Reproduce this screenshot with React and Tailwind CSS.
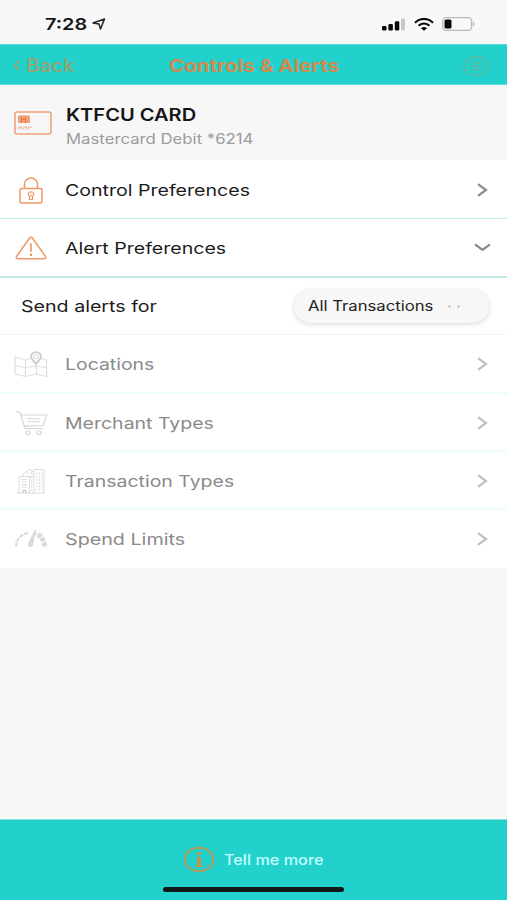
import React from 'react';

function Chevron({ className, down }) {
  return down ? (
    <svg className={className} width="17" height="9" viewBox="0 0 17 9" fill="none" stroke="currentColor" strokeWidth="2.200">
      <path d="M1 1.300 8.500 6.900 16 1.300" />
    </svg>
  ) : (
    <svg className={className} width="11" height="14" viewBox="0 0 11 14" fill="none" stroke="currentColor" strokeWidth="2.200">
      <path d="M1 1.200 9 7 1 12.800" />
    </svg>
  );
}

function CardIcon() {
  return (
    <svg width="38" height="24" viewBox="0 0 38 24" fill="none" stroke="#f0a27a" strokeWidth="1.600">
      <rect x="1" y="1" width="36" height="22" rx="2" />
      <rect x="4" y="4.500" width="12" height="7.500" rx="1" fill="#f1a078" stroke="none" />
      <path d="M7.500 5v7M11.500 5v7M7.500 8.500h4" stroke="#d8793f" strokeWidth=".9" />
      <path d="M4 18.500l1-2.500h3l-1 2.500M9 18.500l1-2.500h3l-1 2.500M14 18.500l1-2.500h3.500" strokeWidth="1" opacity=".85" />
    </svg>
  );
}

function LockIcon() {
  return (
    <svg width="24" height="27" viewBox="0 0 24 27" fill="none" stroke="#ef9765" strokeWidth="1.500">
      <rect x="1" y="11.500" width="22" height="14.500" rx="1.500" />
      <path d="M5.500 11.500V7a6.500 6 0 0 1 13 0v4.500" />
      <path d="M12 14.800c-3.200 0-3.200 3.200-1.600 4.400V22.500h3.200v-3.300c1.600-1.200 1.600-4.400-1.600-4.400z" strokeWidth="1.200" />
      <path d="M12 17v3" strokeWidth="1" />
    </svg>
  );
}

function AlertIcon() {
  return (
    <svg width="32" height="24" viewBox="0 0 32 24" fill="none" stroke="#ef9765" strokeWidth="1.500" strokeLinejoin="round">
      <path d="M14.600 2 1.500 20.500Q.7 22.700 3 22.700H29Q31.300 22.700 30.500 20.500L17.400 2Q16 .3 14.600 2Z" />
      <path d="M16 7.500v8.200" strokeWidth="1.700" />
      <circle cx="16" cy="18.800" r="1.200" fill="#ee8b55" stroke="none" />
    </svg>
  );
}

function MapIcon() {
  return (
    <svg width="34" height="27" viewBox="0 0 34 27" fill="none" stroke="#dedede" strokeWidth="1.200">
      <path d="M17 7.500 11.500 9 1 6V23l10.500 2.500L22.500 23 32.500 25.500V9L27 7.500M11.500 9v16.500M22.500 13.500V23M1 15l10.500 1.500L22.500 15l10 1.500" />
      <path d="M22 13C19.500 9.500 17 8 17 5.700a5 4.700 0 0 1 10 0C27 8 24.500 9.500 22 13Z" stroke="#cbcbcb" strokeWidth="1.700" />
      <ellipse cx="22" cy="5.500" rx="2.600" ry="2.300" stroke="#e3e3e3" />
    </svg>
  );
}

function CartIcon() {
  return (
    <svg width="33" height="26" viewBox="0 0 33 26" fill="none" stroke="#d5d5d5" strokeWidth="1.200">
      <path d="M1 1.500 5 2.500 10 18.500H28M6 5H31.500L28.500 15.500 9 16.200" />
      <path d="M12 8.700h13M13 11.700h12" strokeWidth="1" />
      <ellipse cx="13" cy="22.800" rx="2.200" ry="1.800" />
      <ellipse cx="24" cy="22.800" rx="2.200" ry="1.800" />
    </svg>
  );
}

function BuildingsIcon() {
  return (
    <svg width="28" height="26" viewBox="0 0 28 26" fill="none" stroke="#dcdcdc" strokeWidth="1">
      <path d="M0 25H28M2 25V8.500H12.500V25M17 25V1.500H27V25M6 8.500V6L12 1.500 17 4M12.500 9H17M5 8.500V7" />
      <path d="M4.500 11.500h5.500M4.500 14h5.500M4.500 16.500h5.500M4.500 19h5.500" />
      <path d="M20 4.500v18M22.500 4.500v18M25 4.500v18M14.800 5v18M10 5.500l4.500-1.500" strokeDasharray="2 1.200" />
      <path d="M6 25v-2.500h3V25" stroke="#bbb" />
    </svg>
  );
}

function GaugeIcon() {
  return (
    <svg width="34" height="18" viewBox="0 0 34 18" fill="none" stroke="#d9d9d9">
      <path d="M2 16.500C2.500 9 7 4 14.500 3" strokeWidth="2.200" strokeDasharray="4 1.200" />
      <path d="M24 4.500C27.500 7 30 10 31 17.500" strokeWidth="5" strokeDasharray="4 1" />
      <path d="M21.500 0 14.500 14a2 2 0 0 0 3.500 1.800L21.500 0Z" fill="#ddd" stroke="#cfcfcf" strokeWidth="1" />
      <path d="M19.500 2.500l4 2" strokeWidth="1.500" />
    </svg>
  );
}

function StatusBar() {
  return (
    <div className="flex h-11 shrink-0 items-center pt-[4px] pl-[45px] pr-[32px]">
      <span className="w-[47px] whitespace-nowrap text-[16px] leading-5 font-semibold text-[#171717]">
        <span className="inline-block origin-left scale-x-[1.240]">7:28</span>
      </span>
      <svg width="14" height="12" viewBox="0 0 14 12" fill="none" stroke="#222" strokeWidth="1.500" strokeLinejoin="round">
        <path d="M12.500 1 1 5l6 1L8.500 11z" />
      </svg>
      <div className="ml-auto flex items-center gap-[8px]">
        <svg width="24" height="13" viewBox="0 0 24 13" fill="#080808">
          <rect x="0" y="8" width="4.500" height="4.500" rx="1.200" />
          <rect x="6.400" y="6" width="4.500" height="6.500" rx="1.200" />
          <rect x="12.800" y="3.300" width="4.500" height="9.200" rx="1.200" />
          <rect x="19" y="0.500" width="4" height="12" rx="1" fill="#c9c9c9" />
        </svg>
        <svg width="20" height="13" viewBox="0 0 20 13" fill="none" stroke="#080808">
          <path d="M1 4.800C6-.3 14-.3 19 4.800" strokeWidth="2.200" />
          <path d="M4.500 7.800c3-3 8-3 11 0" strokeWidth="2" />
          <path d="M7 10.200Q10 7.800 13 10.200L10 12.800Z" fill="#080808" stroke="none" />
        </svg>
        <svg width="33" height="14" viewBox="0 0 33 14" fill="none">
          <rect x=".7" y=".7" width="29" height="12.600" rx="3.500" stroke="#b9b9b9" strokeWidth="1.300" />
          <rect x="2.500" y="2.500" width="7" height="9" rx="1.600" fill="#060606" />
          <path d="M31 4.800c2 .8 2 3.600 0 4.400z" fill="#b3b3b3" />
        </svg>
      </div>
    </div>
  );
}

function Header() {
  return (
    <div className="flex h-[41px] shrink-0 items-center border-y border-[#62d9d5] bg-[#22d1cc] pt-[2px] text-[#d48a4b]">
      <div className="flex w-[169px] items-center pl-[13px] text-[#96a46f]">
        <svg width="8" height="11" viewBox="0 0 8 11" fill="none" stroke="currentColor" strokeWidth="1.800">
          <path d="M6.500 1 1.500 5.500l5 4.500" />
        </svg>
        <span className="ml-[5px] origin-left scale-x-[1.140] text-[18px] leading-6 font-medium">Back</span>
      </div>
      <h1 className="w-[285px] whitespace-nowrap text-[17px] leading-6 font-bold">
        <span className="inline-block origin-left scale-x-[1.210]">Controls &amp; Alerts</span>
      </h1>
      <svg className="ml-[9px]" width="26" height="20" viewBox="0 0 26 20" fill="none" stroke="#5eb69a" strokeWidth="1.500">
        <ellipse cx="13" cy="10" rx="12" ry="9.200" />
        <path d="M8.500 6.500h9M7 10h12M8.500 13.500h9" strokeWidth="1.500" />
      </svg>
    </div>
  );
}

function Row({ icon, label, scale, muted, down, size }) {
  return (
    <div className={`flex shrink-0 items-center bg-white ${size}`}>
      <div className="flex w-[65px] justify-center pr-[3px]">{icon}</div>
      <span className={`origin-left whitespace-nowrap text-[16px] leading-6 ${scale} ${muted ? 'text-[#8a8a8a]' : 'text-[#1c1c1c]'}`}>{label}</span>
      <div className={`ml-auto flex w-[50px] justify-center ${muted ? 'text-[#c0c0c0]' : 'text-[#8a8a8a]'}`}>
        <Chevron down={down} />
      </div>
    </div>
  );
}

export default function App() {
  return (
    <main className="flex h-[900px] w-[507px] flex-col overflow-hidden bg-[#f8f8f8] font-['Inter',sans-serif]">
      <StatusBar />
      <Header />
      <section className="flex h-[75px] shrink-0 items-center bg-[#f7f7f7]">
        <div className="flex w-[66px] pl-[14px]"><CardIcon /></div>
        <div className="flex flex-col items-start pt-[8px] whitespace-nowrap">
          <span className="origin-left scale-x-[1.180] text-[17px] leading-6 font-semibold text-[#151515]">KTFCU CARD</span>
          <span className="origin-left scale-x-[1.195] text-[14px] leading-6 text-[#9c9c9c]">Mastercard Debit *6214</span>
        </div>
      </section>
      <Row icon={<LockIcon />} label="Control Preferences" scale="scale-x-[1.223]" size="h-[59px] border-b border-[#c1ece5] pt-[2px]" />
      <Row icon={<AlertIcon />} label="Alert Preferences" scale="scale-x-[1.223]" down size="h-[59px] border-b-2 border-[#c4e8e8]" />
      <section className="flex h-[57px] shrink-0 items-center border-b border-[#eff2f1] bg-white pl-[21px]">
        <span className="origin-left scale-x-[1.226] whitespace-nowrap text-[16px] leading-6 text-[#1c1c1c]">Send alerts for</span>
        <button className="mr-[18px] ml-auto flex h-[33px] w-[195px] items-center rounded-full bg-[#f7f7f7] pl-[14px] shadow-[0_1px_5px_rgba(0,0,0,0.17)]">
          <span className="w-[140px] text-left whitespace-nowrap text-[14px] leading-5 text-[#222]">
            <span className="inline-block origin-left scale-x-[1.190]">All Transactions</span>
          </span>
          <span className="flex gap-[6px]">
            <span className="h-[3px] w-[3px] rounded-full bg-[#cdcdcd]" />
            <span className="h-[3px] w-[3px] rounded-full bg-[#cdcdcd]" />
          </span>
        </button>
      </section>
      <Row icon={<MapIcon />} label="Locations" scale="scale-x-[1.215]" muted size="h-[59px] border-b-2 border-[#ebfdf9] pt-[1px]" />
      <Row icon={<CartIcon />} label="Merchant Types" scale="scale-x-[1.218]" muted size="h-[58px] border-b-2 border-[#ebfdf9] pt-[2px]" />
      <Row icon={<BuildingsIcon />} label="Transaction Types" scale="scale-x-[1.217]" muted size="h-[58px] border-b-2 border-[#ebfdf9] pt-[2px]" />
      <Row icon={<GaugeIcon />} label="Spend Limits" scale="scale-x-[1.232]" muted size="h-[58px]" />
      <footer className="mt-auto flex h-[81px] shrink-0 flex-col items-center border-t border-[#8bdfe0] bg-[#22d1cc]">
        <div className="flex w-full items-center pt-[26px] pl-[183px]">
          <svg width="32" height="27" viewBox="0 0 32 27" fill="none" stroke="#b89b5c" strokeWidth="1.900">
            <ellipse cx="16" cy="13.500" rx="14.200" ry="11.800" />
            <path d="M16 11v9.500" stroke="#d98b42" strokeWidth="3.500" />
            <path d="M13.500 11.700h3M12.800 20.300h6.400" stroke="#d98b42" strokeWidth="1.300" />
            <ellipse cx="16" cy="7.500" rx="1.900" ry="1.700" fill="#d98b42" stroke="none" />
          </svg>
          <span className="ml-[9px] origin-left scale-x-[1.160] whitespace-nowrap text-[14px] leading-5 font-medium text-[#c6ffff]">Tell me more</span>
        </div>
        <div className="mt-[14px] h-[5px] w-[181px] rounded-full bg-[#10191a]" />
      </footer>
    </main>
  );
}
